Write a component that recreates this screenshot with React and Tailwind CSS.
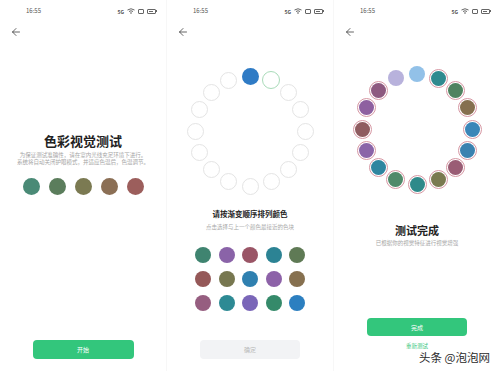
import React from "react";
import { ArrowLeft } from "lucide-react";

const FONT = { fontFamily: '"Noto Sans CJK SC", "Noto Sans", sans-serif' };

const INTRO_COLORS = ["#4a8a76", "#5b7d5c", "#7b7a52", "#8b6f55", "#9c5e5c"];

const PICK_GRID = [
  "#3f8470", "#8a63a8", "#9a5566", "#2c8394", "#5f7a55",
  "#955858", "#777750", "#2f80b0", "#8d62a8", "#86704f",
  "#965e80", "#2d8a94", "#7a66b8", "#358a6a", "#2c7fc0"
];

// clockwise from the top
const RESULT_RING = [
  "#92c1e8", "#2f8a8f", "#4f8360", "#85704f", "#3a86b8", "#3a82b0", "#9a5d75", "#7a7a50",
  "#2f8a8a", "#4f8a6a", "#2f86a0", "#8a64a8", "#8f5c60", "#8e60a0", "#8e5a80", "#b8b2dc"
];

function ringPos(i, r) {
  const a = (i * 22.5 * Math.PI) / 180;
  return { left: 64 + r * Math.sin(a), top: 64 - r * Math.cos(a) };
}

function StatusBar() {
  return (
    <div className="h-[22px] flex items-center justify-between pl-[26px] pr-[9px] text-[#555]">
      <span className="text-[6px] leading-none">16:55</span>
      <div className="flex items-center gap-[3px]">
        <span className="text-[5px] leading-none font-bold">5G</span>
        <svg width="8" height="6" viewBox="0 0 8 6">
          <path d="M0.5 2 Q4 -0.5 7.5 2" stroke="#555" strokeWidth="0.9" fill="none" />
          <path d="M2 3.5 Q4 2 6 3.5" stroke="#555" strokeWidth="0.9" fill="none" />
          <circle cx="4" cy="5" r="0.8" fill="#555" />
        </svg>
        <div className="w-[6px] h-[5px] rounded-[1px] border border-[#666]" />
        <div className="flex items-center">
          <div className="w-[9px] h-[5px] rounded-[1px] border border-[#666] p-[1px]">
            <div className="w-[4px] h-full bg-[#666]" />
          </div>
          <div className="w-[1px] h-[2px] bg-[#666]" />
        </div>
      </div>
    </div>
  );
}

function BackRow() {
  return (
    <div className="h-[20px] flex items-center pl-[10px]">
      <ArrowLeft size={12} strokeWidth={1.5} color="#333" />
    </div>
  );
}

function IntroPanel() {
  return (
    <div className="flex-1 flex flex-col bg-white">
      <StatusBar />
      <BackRow />
      <div className="mt-[91px] text-center text-[13px] leading-[16px] font-bold text-[#222]">色彩视觉测试</div>
      <div className="mt-[3px] text-center text-[5.5px] leading-[7px] text-[#a5a5a5]">
        为保证测试准确性，请在室内光线充足环境下进行。
        <br />
        系统将自动关闭护眼模式，并适应色温后，色温调节。
      </div>
      <div className="mt-[12px] flex justify-center gap-[9px]">
        {INTRO_COLORS.map((c) => (
          <div key={c} className="w-[17px] h-[17px] rounded-full" style={{ backgroundColor: c }} />
        ))}
      </div>
      <div className="mt-auto mb-[12px] mx-auto w-[101px] h-[19px] rounded-[4px] bg-[#33c67c] flex items-center justify-center text-white text-[6px]">
        开始
      </div>
    </div>
  );
}

function PickPanel() {
  return (
    <div className="flex-1 flex flex-col bg-white">
      <StatusBar />
      <BackRow />
      <div className="mt-[25px] mx-auto relative w-[128px] h-[128px]">
        {Array.from({ length: 16 }).map((_, i) => {
          const p = ringPos(i, 55);
          if (i === 0) {
            return (
              <div
                key={i}
                className="absolute w-[17px] h-[17px] -ml-[8.5px] -mt-[8.5px] rounded-full bg-[#2f7bc5]"
                style={p}
              />
            );
          }
          if (i === 1) {
            return (
              <div
                key={i}
                className="absolute w-[18px] h-[18px] -ml-[9px] -mt-[9px] rounded-full border border-[#a9dbb9]"
                style={p}
              />
            );
          }
          return (
            <div
              key={i}
              className="absolute w-[17px] h-[17px] -ml-[8.5px] -mt-[8.5px] rounded-full border border-[#e4e4e4]"
              style={p}
            />
          );
        })}
      </div>
      <div className="mt-[14px] text-center text-[7.5px] leading-[10px] font-bold text-[#222]">请按渐变顺序排列颜色</div>
      <div className="mt-[4px] text-center text-[5.5px] leading-[8px] text-[#a8a8a8]">点击选择与上一个颜色最接近的色块</div>
      <div className="mt-[16px] mx-auto grid grid-cols-5 gap-x-[7.5px] gap-y-[8px]">
        {PICK_GRID.map((c, i) => (
          <div key={i} className="w-[16px] h-[16px] rounded-full" style={{ backgroundColor: c }} />
        ))}
      </div>
      <div className="mt-auto mb-[12px] mx-auto w-[100px] h-[19px] rounded-[4px] bg-[#f2f3f5] flex items-center justify-center text-[#b9b9b9] text-[6px]">
        确定
      </div>
    </div>
  );
}

function ResultPanel() {
  return (
    <div className="flex-1 flex flex-col bg-white relative">
      <StatusBar />
      <BackRow />
      <div className="mt-[23px] mx-auto relative w-[128px] h-[128px]">
        {RESULT_RING.map((c, i) => {
          const p = ringPos(i, 55);
          if (i === 0 || i === 15) {
            return (
              <div
                key={i}
                className="absolute w-[16px] h-[16px] -ml-[8px] -mt-[8px] rounded-full"
                style={{ ...p, backgroundColor: c }}
              />
            );
          }
          return (
            <div
              key={i}
              className="absolute w-[19px] h-[19px] -ml-[9.5px] -mt-[9.5px] rounded-full border border-[#d697a3] bg-white p-[1px]"
              style={p}
            >
              <div className="w-full h-full rounded-full" style={{ backgroundColor: c }} />
            </div>
          );
        })}
      </div>
      <div className="mt-[30px] text-center text-[11px] leading-[14px] font-bold text-[#222]">测试完成</div>
      <div className="mt-[2px] text-center text-[5.5px] leading-[8px] text-[#a8a8a8]">已根据你的视觉特征进行视觉增强</div>
      <div className="mt-auto mx-auto w-[100px] h-[18px] rounded-[4px] bg-[#33c67c] flex items-center justify-center text-white text-[6px]">
        完成
      </div>
      <div className="mt-[7px] mb-[22px] text-center text-[5.5px] leading-[6px] text-[#33c67c]">重新测试</div>
      <div className="absolute right-[10px] bottom-[7px] text-[11.5px] leading-[13px] text-[#2a2a2a] whitespace-nowrap [text-shadow:0_0_2px_#fff]">
        头条 @泡泡网
      </div>
    </div>
  );
}

export default function App() {
  return (
    <div className="w-[500px] h-[371px] flex gap-px bg-[#f7f7f7]" style={FONT}>
      <IntroPanel />
      <PickPanel />
      <ResultPanel />
    </div>
  );
}
